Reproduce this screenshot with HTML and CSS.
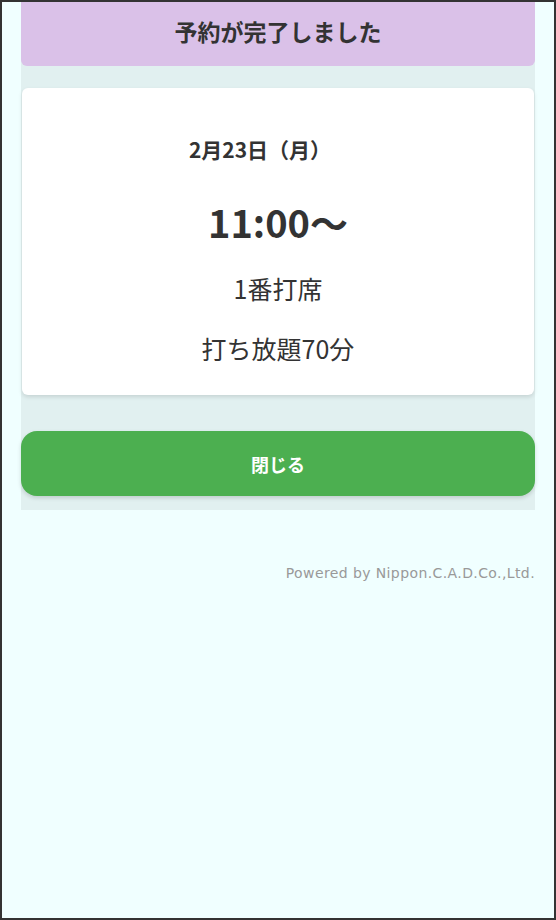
FILE: index.html
```html
<!DOCTYPE html>
<html lang="ja">
<head>
  <meta charset="UTF-8" />
  <title>予約完了</title>
  <meta name="viewport" content="width=device-width, initial-scale=1.0" />
  <link rel="stylesheet" href="styles.css">
</head>
<body>
  <div class="frame">
    <div class="wrap">
      <h1 class="head">予約が完了しました</h1>
      <div class="card">
        <p class="date">2月23日（月）</p>
        <p class="time">11:00〜</p>
        <p class="info seat">1番打席</p>
        <p class="info plan">打ち放題70分</p>
      </div>
      <button class="close" type="button">閉じる</button>
    </div>
    <p class="powered">Powered by Nippon.C.A.D.Co.,Ltd.</p>
  </div>
</body>
</html>
```

FILE: styles.css
```css
html, body {
  margin: 0;
  padding: 0;
}
body {
  font-family: 'Noto Sans CJK JP', 'Noto Sans', sans-serif;
  color: #333;
}
.frame {
  box-sizing: border-box;
  width: 556px;
  height: 920px;
  border: 2px solid #333;
  background-color: #f0ffff;
}
.wrap {
  width: 514px;
  margin: 0 auto;
  padding-bottom: 14px;
  background-color: #e1f0f0;
}
.head {
  margin: 0;
  height: 64px;
  line-height: 58px;
  text-align: center;
  font-size: 23px;
  font-weight: bold;
  background-color: #dac1e8;
  border-radius: 0 0 6px 6px;
}
.card {
  margin: 22px 1px 0;
  padding: 46px 0 31px;
  background: #ffffff;
  border-radius: 6px;
  box-shadow: 0 2px 4px rgba(0,0,0,0.12);
  text-align: center;
}
.card p {
  margin: 0;
}
.date {
  padding-right: 36px;
  font-size: 21px;
  line-height: 30px;
  font-weight: bold;
}
.time {
  margin-top: 33px !important;
  font-size: 38px;
  line-height: 50px;
  font-weight: bold;
}
.info {
  font-size: 25px;
  line-height: 32px;
}
.seat {
  margin-top: 25px !important;
}
.plan {
  margin-top: 28px !important;
}
.close {
  display: block;
  width: 100%;
  height: 65px;
  margin-top: 36px;
  border: none;
  border-radius: 16px;
  background-color: #4caf50;
  color: #fff;
  font-family: inherit;
  font-size: 18px;
  font-weight: bold;
  box-shadow: 0 2px 4px rgba(0,0,0,0.15);
  cursor: pointer;
}
.powered {
  width: 514px;
  margin: 54px auto 0;
  text-align: right;
  font-family: 'DejaVu Sans', Verdana, sans-serif;
  font-size: 14px;
  letter-spacing: 0.4px;
  line-height: 18px;
  color: #999;
}
```
